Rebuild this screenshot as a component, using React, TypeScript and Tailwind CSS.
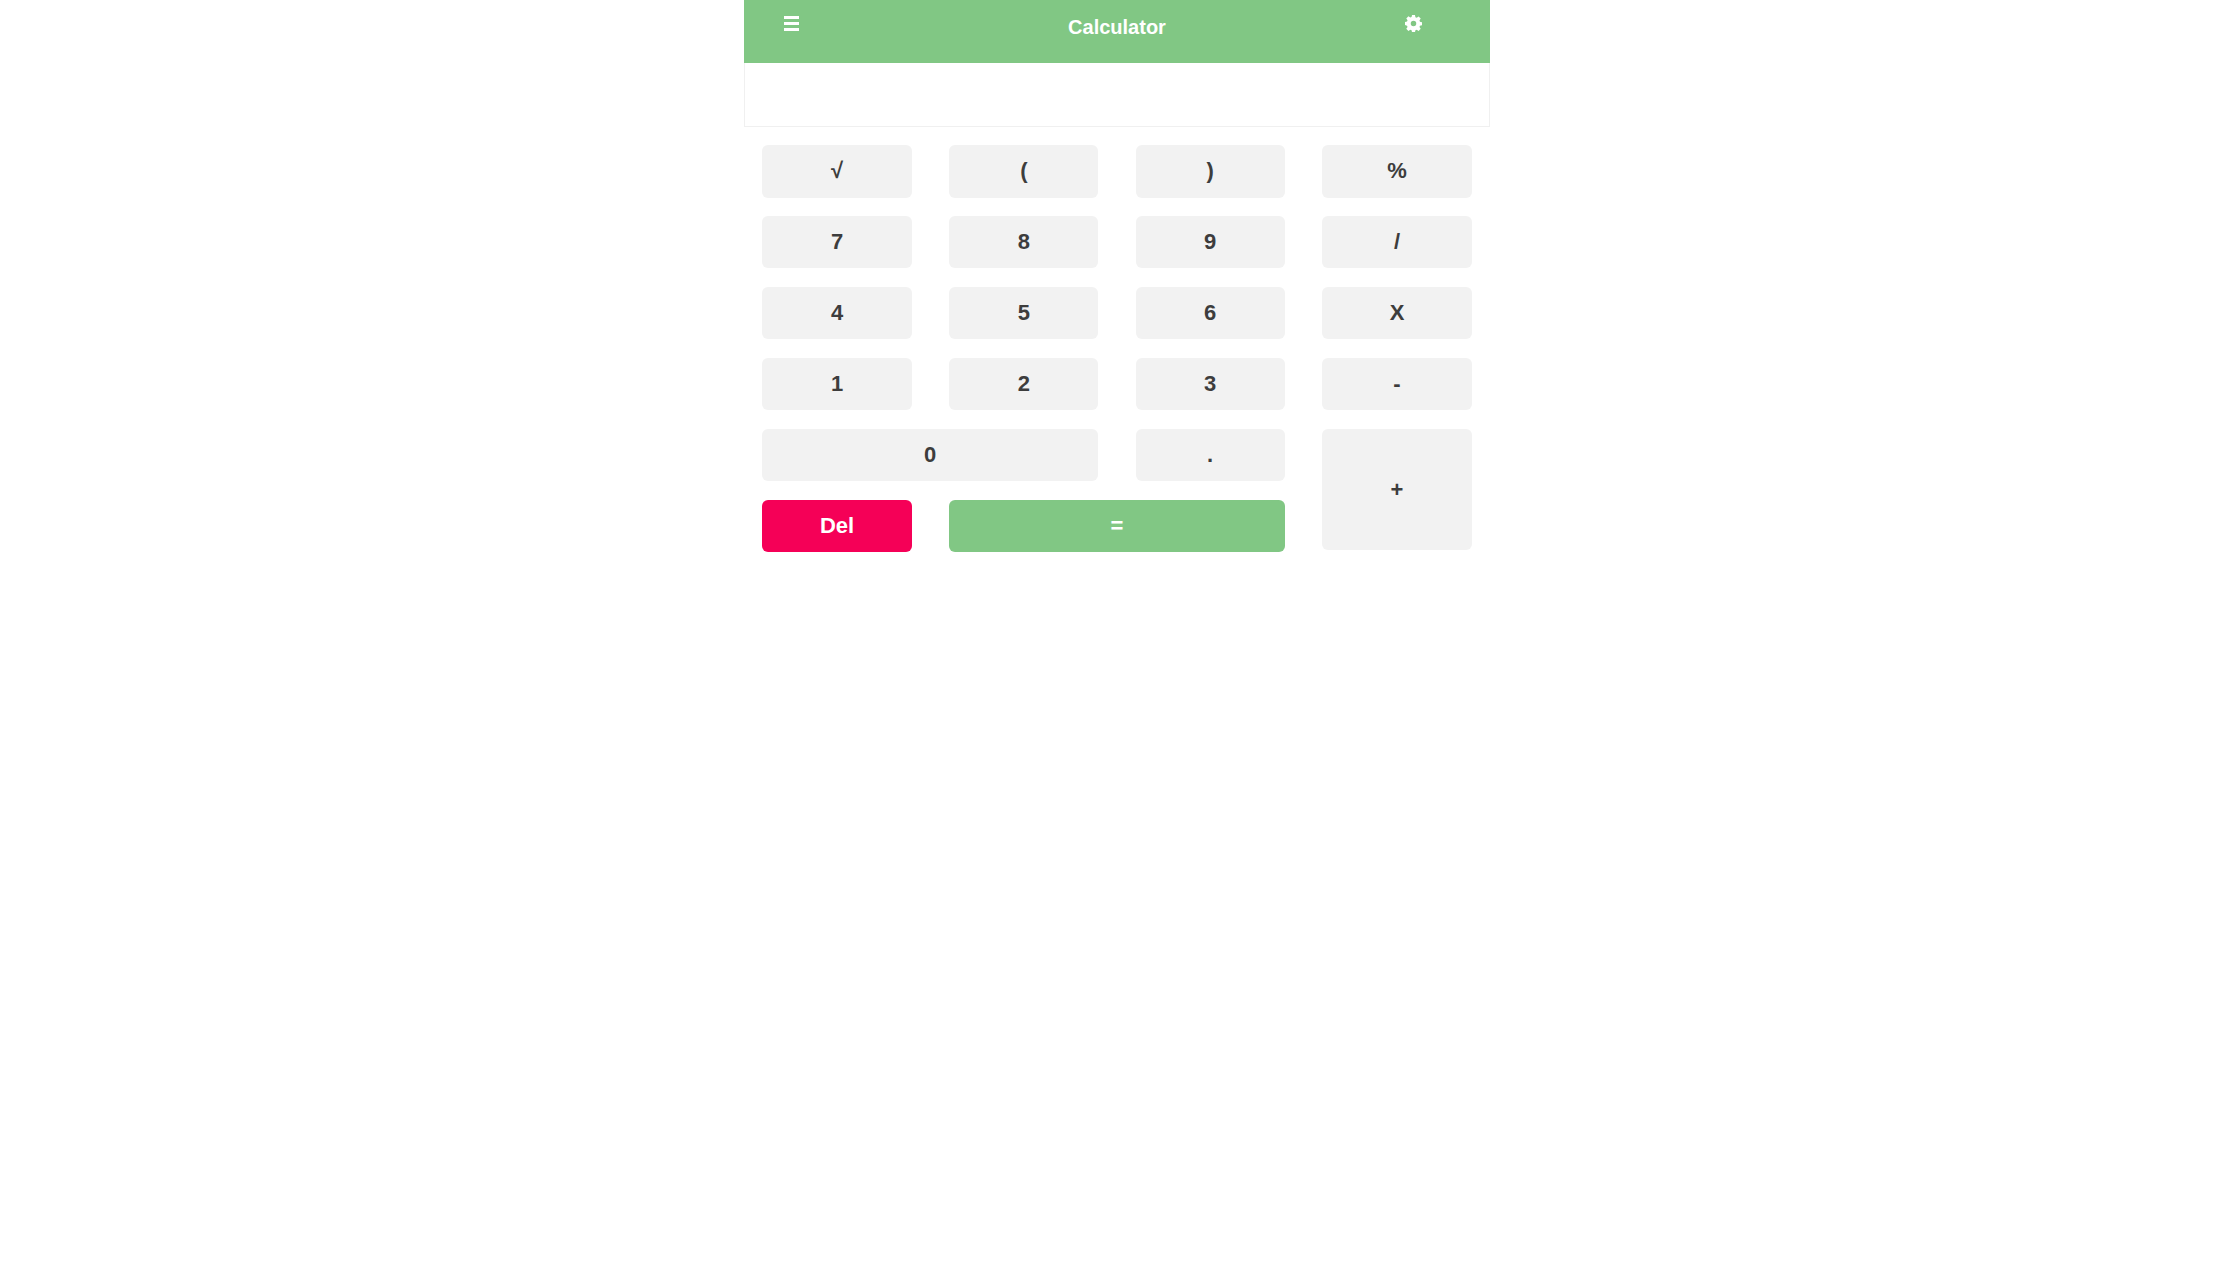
const rows = [
  ['√', '(', ')', '%'],
  ['7', '8', '9', '/'],
  ['4', '5', '6', 'X'],
  ['1', '2', '3', '-'],
];

const keyClass = 'flex items-center justify-center rounded-md text-[22px] font-bold';

function Key({ label, className = 'h-[52px] pb-[2px]' }: { label: string; className?: string }) {
  return <button className={`${keyClass} bg-[#f2f2f2] text-[#3d3d3d] ${className}`}>{label}</button>;
}

function MenuIcon() {
  return (
    <svg width="15" height="15" viewBox="0 0 15 15" fill="white">
      <rect x="0" y="0" width="15" height="3" />
      <rect x="0" y="6" width="15" height="3" />
      <rect x="0" y="12" width="15" height="3" />
    </svg>
  );
}

function GearIcon() {
  return (
    <svg width="17" height="17" viewBox="0 0 16 16" fill="white">
      <path
        fillRule="evenodd"
        d="M6.6 0h2.8l.4 2.1 1.2.5 1.8-1.2 2 2-1.2 1.8.5 1.2 1.9.4v2.8l-1.9.4-.5 1.2 1.2 1.8-2 2-1.8-1.2-1.2.5-.4 1.9H6.6l-.4-1.9-1.2-.5-1.8 1.2-2-2 1.2-1.8-.5-1.2L0 9.4V6.6l1.9-.4.5-1.2-1.2-1.8 2-2L5 2.4l1.2-.5L6.6 0zM8 5.4a2.6 2.6 0 1 0 0 5.2 2.6 2.6 0 0 0 0-5.2z"
      />
    </svg>
  );
}

export default function App() {
  return (
    <div className="min-h-screen bg-white font-['Liberation_Sans',Arial,sans-serif]">
      <div className="ml-[744px] w-[746px]">
        <header className="grid h-[63px] grid-cols-[1fr_auto_1fr] bg-[#81c784] text-white">
          <div className="pl-10 pt-4">
            <MenuIcon />
          </div>
          <h1 className="pt-[17px] text-[20px] font-bold leading-none">Calculator</h1>
          <div className="flex justify-end pr-[68px] pt-[15px]">
            <GearIcon />
          </div>
        </header>
        <div className="h-[64px] border border-t-0 border-[#f0f0f0]" />
        <div className="grid grid-cols-[150px_149px_149px_150px] gap-x-[37.33px] gap-y-[19px] px-[18px] pt-[18px]">
          {rows[0].map((k) => (
            <Key key={k} label={k} className="-mb-px h-[53px] pb-[3px]" />
          ))}
          {rows.slice(1).flat().map((k) => (
            <Key key={k} label={k} />
          ))}
          <Key label="0" className="col-span-2 h-[52px] pb-[2px]" />
          <Key label="." />
          <Key label="+" className="row-span-2 h-[121px]" />
          <button className={`${keyClass} h-[52px] bg-[#f50057] pb-[2px] text-white`}>Del</button>
          <button className={`${keyClass} col-span-2 h-[52px] bg-[#81c784] pb-[2px] text-white`}>=</button>
        </div>
      </div>
    </div>
  );
}
